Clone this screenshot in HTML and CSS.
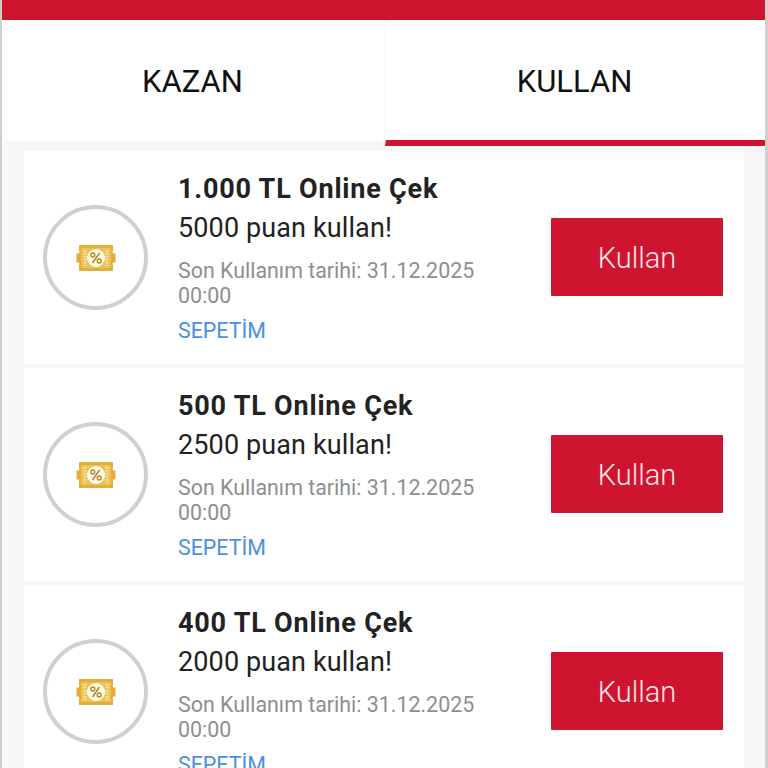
FILE: index.html
```html
<!DOCTYPE html>
<html lang="tr">
<head>
<meta charset="utf-8">
<title>Kullan</title>
<link rel="stylesheet" href="styles.css">
</head>
<body>
<svg class="defs" width="0" height="0" aria-hidden="true">
  <symbol id="ticket" viewBox="0 0 40 28">
    <path d="M3 1H37V7A1.500 1.500 0 0 0 39.500 9V19A1.500 1.500 0 0 0 37 21V27H3V21A1.500 1.500 0 0 0 .5 19V9A1.500 1.500 0 0 0 3 7Z" fill="#e2b03a"/>
    <path d="M5 4H35V24H5Z" fill="#ecc358"/>
    <path d="M9 6V22M31 6V22" stroke="#f7e3a6" stroke-width="3" stroke-dasharray="1.500 1.500"/>
    <circle cx="20" cy="14" r="9" fill="#fffbee"/>
    <path d="M16.500 19L23.500 9" stroke="#b5851c" stroke-width="1.500" fill="none"/>
    <circle cx="16.800" cy="11" r="2" stroke="#b5851c" stroke-width="1.300" fill="none"/>
    <circle cx="23.200" cy="17" r="2" stroke="#b5851c" stroke-width="1.300" fill="none"/>
  </symbol>
</svg>
<div class="page">
  <div class="topbar"></div>
  <nav class="tabs">
    <div class="tab">KAZAN</div>
    <div class="tab active">KULLAN</div>
  </nav>
  <main class="list">
    <article class="card">
      <div class="badge"><svg class="ticket"><use href="#ticket"/></svg></div>
      <div class="info">
        <h2 class="title">1.000 TL Online Çek</h2>
        <p class="points">5000 puan kullan!</p>
        <p class="date">Son Kullanım tarihi: 31.12.2025 00:00</p>
        <a class="cart">SEPETİM</a>
      </div>
      <button class="use">Kullan</button>
    </article>
    <article class="card">
      <div class="badge"><svg class="ticket"><use href="#ticket"/></svg></div>
      <div class="info">
        <h2 class="title">500 TL Online Çek</h2>
        <p class="points">2500 puan kullan!</p>
        <p class="date">Son Kullanım tarihi: 31.12.2025 00:00</p>
        <a class="cart">SEPETİM</a>
      </div>
      <button class="use">Kullan</button>
    </article>
    <article class="card">
      <div class="badge"><svg class="ticket"><use href="#ticket"/></svg></div>
      <div class="info">
        <h2 class="title">400 TL Online Çek</h2>
        <p class="points">2000 puan kullan!</p>
        <p class="date">Son Kullanım tarihi: 31.12.2025 00:00</p>
        <a class="cart">SEPETİM</a>
      </div>
      <button class="use">Kullan</button>
    </article>
  </main>
</div>
</body>
</html>
```
FILE: styles.css
```css
* { box-sizing: border-box; }
html, body { margin: 0; height: 100%; overflow: hidden; }
body { font-family: Roboto, "Liberation Sans", sans-serif; background: #fff; }
.defs { position: absolute; }
.page {
  height: 768px;
  overflow: hidden;
  border-left: 2px solid #cfcfcf;
  border-right: 3px solid #cfcfcf;
  background: #f7f7f8;
}
.topbar { height: 20px; background: #ce142e; }
.tabs { display: flex; height: 126px; }
.tab {
  flex: 0 0 383px;
  height: 121px;
  display: flex;
  align-items: center;
  justify-content: center;
  padding: 2px 2px 0 0;
  font-size: 31px;
  color: #111;
  background: #fff;
}
.tab.active {
  flex: 1;
  height: 126px;
  border-left: 1px solid #f3f3f4;
  border-bottom: 6px solid #ce142e;
  padding-top: 2px;
}
.list {
  display: flex;
  flex-direction: column;
  gap: 4px;
  padding: 5px 21px 0 22px;
}
.card {
  flex: 0 0 213px;
  display: flex;
  align-items: center;
  background: #fff;
  padding: 0 21px 0 19px;
}
.badge {
  flex: 0 0 105px;
  height: 105px;
  border: 4px solid #d0d0d0;
  border-radius: 50%;
  display: flex;
  align-items: center;
  justify-content: center;
}
.ticket { width: 40px; height: 28px; }
.info { flex: 1; padding-left: 30px; padding-right: 60px; margin-top: -2px; }
.title { margin: 0; font-size: 27px; line-height: 38px; font-weight: 700; color: #222; letter-spacing: .8px; }
.points { margin: 1px 0 0; font-size: 27px; line-height: 38px; color: #222; letter-spacing: .12px; }
.date { margin: 11px 0 0; font-size: 21.4px; line-height: 25px; color: #8e8e8e; }
.cart { display: block; margin-top: 10px; font-size: 21.4px; line-height: 26px; color: #4a90e2; }
.use {
  flex: 0 0 172px;
  height: 78px;
  margin-top: -1px;
  padding-top: 3px;
  border: 0;
  border-radius: 1px;
  background: #ce142e;
  color: #fbe6e9;
  font-family: inherit;
  font-size: 29px;
  font-weight: 300;
}
```
